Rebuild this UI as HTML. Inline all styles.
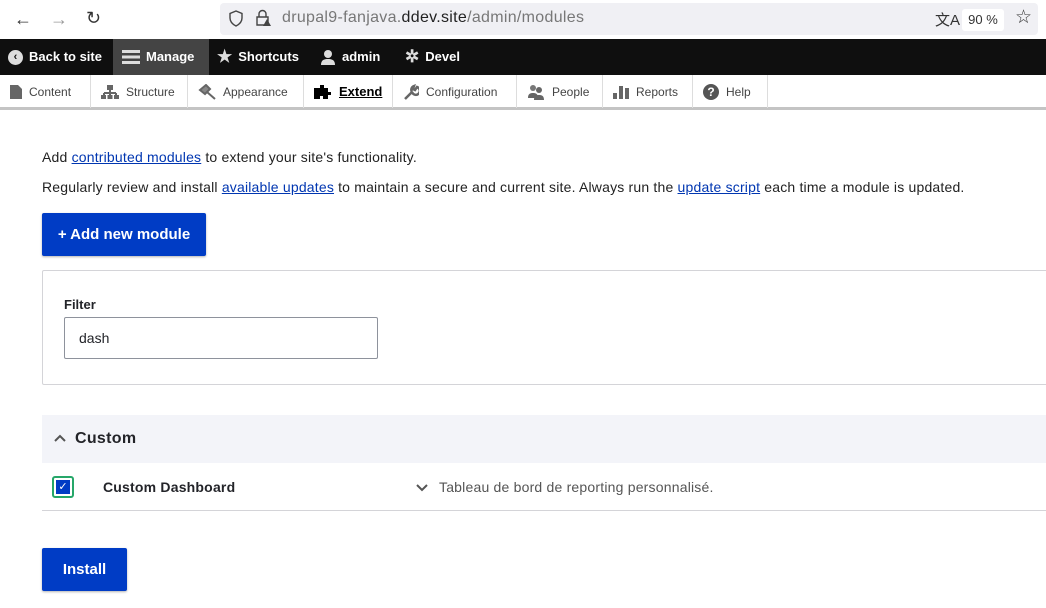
<!DOCTYPE html>
<html><head><meta charset="utf-8"><style>
*{box-sizing:border-box;margin:0;padding:0}
body{width:1046px;height:608px;overflow:hidden;background:#fff;font-family:"Liberation Sans",sans-serif;position:relative;color:#232429}
.a{position:absolute}
.tb{top:39px;height:36px;background:#0f0f0f;width:1046px}
.tbi{position:absolute;top:0;height:36px;color:#fff;font-weight:bold;font-size:13px;line-height:36px;display:flex;align-items:center;gap:6px}
.tray{top:75px;height:35px;width:1046px;background:#fff;border-bottom:3px solid #c4c4c4}
.ti{position:absolute;top:0;height:33px;border-right:1px solid #ddd;font-size:12px;color:#444;display:flex;align-items:center;gap:7px;padding-left:10px}
p{font-size:14px;color:#222;letter-spacing:0.19px}
a{color:#0036b1;text-decoration:underline}
.btn{background:#003cc5;color:#fff;font-weight:bold;font-size:15px;display:flex;align-items:center;justify-content:center;border-radius:2px;box-shadow:0 1px 2px rgba(0,0,0,.3)}
</style></head><body>
<div class="a" style="left:14px;top:9px;font-size:18px;color:#333">←</div>
<div class="a" style="left:50px;top:9px;font-size:18px;color:#999">→</div>
<div class="a" style="left:86px;top:8px;font-size:18px;color:#333">↻</div>
<div class="a" style="left:220px;top:3px;width:818px;height:32px;background:#f0f0f4;border-radius:4px"></div>
<svg class="a" style="left:228px;top:10px" width="16" height="17" viewBox="0 0 16 17"><path d="M8 1L2 3.5V8c0 4 3 6.5 6 8 3-1.5 6-4 6-8V3.5z" fill="none" stroke="#444" stroke-width="1.4"/></svg>
<svg class="a" style="left:254px;top:9px" width="18" height="18" viewBox="0 0 18 18"><path d="M5 8V5a3.5 3.5 0 017 0v3M3 8h11v8H3z" fill="none" stroke="#444" stroke-width="1.4"/><path d="M13 10l4 7h-8z" fill="#444"/></svg>
<div class="a" style="left:282px;top:9px;font-size:16px;color:#777;letter-spacing:0.3px">drupal9-fanjava.<span style="color:#222">ddev.site</span>/admin/modules</div>
<div class="a" style="left:935px;top:9px;font-size:15px;color:#333">文A</div>
<div class="a" style="left:962px;top:9px;width:42px;height:22px;background:#fff;border-radius:3px;font-size:13px;line-height:22px;text-align:center;color:#333">90 %</div>
<div class="a" style="left:1015px;top:6px;font-size:19px;color:#333">☆</div>
<div class="a tb">
<div class="tbi" style="left:8px"><span style="display:inline-block;width:15px;height:15px;border-radius:50%;background:#ddd;color:#111;font-size:11px;line-height:15px;text-align:center">‹</span>Back to site</div>
<div class="tbi" style="left:113px;width:96px;background:#444;padding-left:9px"><svg width="18" height="14"><rect y="0" width="18" height="3" fill="#ddd"/><rect y="5.5" width="18" height="3" fill="#ddd"/><rect y="11" width="18" height="3" fill="#ddd"/></svg>Manage</div>
<div class="tbi" style="left:217px"><span style="font-size:17px;color:#ddd">★</span>Shortcuts</div>
<div class="tbi" style="left:320px"><svg width="16" height="16"><circle cx="8" cy="5" r="4" fill="#ddd"/><path d="M1 16c0-5 3-6 7-6s7 1 7 6z" fill="#ddd"/></svg> admin</div>
<div class="tbi" style="left:405px"><span style="font-size:17px;color:#ddd">✲</span> Devel</div>
</div>
<div class="a tray">
<div class="ti" style="left:0;width:91px"><svg width="12" height="14"><path d="M0 0h8l4 4v10H0z" fill="#666"/></svg>Content</div>
<div class="ti" style="left:91px;width:97px"><svg width="18" height="14"><rect x="6" y="0" width="6" height="5" fill="#666"/><path d="M9 5v3M3 8h12M3 8v2M9 8v2M15 8v2" stroke="#666" stroke-width="2"/><rect x="0" y="10" width="5" height="4" fill="#666"/><rect x="6.5" y="10" width="5" height="4" fill="#666"/><rect x="13" y="10" width="5" height="4" fill="#666"/></svg>Structure</div>
<div class="ti" style="left:188px;width:116px"><svg width="18" height="16"><path d="M2 6l6-5 4 4-5 5zM9 8l8 7" stroke="#666" stroke-width="2" fill="#888"/></svg>Appearance</div>
<div class="ti" style="left:304px;width:89px;color:#000;font-weight:bold;font-size:13px"><svg width="18" height="16"><path d="M0 4h6V1h4v3h4v4h3v3h-3v4H9v-3H6v3H0z" fill="#000"/></svg><span style="text-decoration:underline">Extend</span></div>
<div class="ti" style="left:393px;width:124px"><svg width="16" height="16"><path d="M2 15l7-7M9 8a4 4 0 105-5l-2 3-2-1 1-3a4 4 0 00-2 6" stroke="#666" stroke-width="2.5" fill="none"/></svg>Configuration</div>
<div class="ti" style="left:517px;width:86px"><svg width="18" height="16"><circle cx="6" cy="4" r="3" fill="#777"/><circle cx="12" cy="6" r="3" fill="#666"/><path d="M1 14c0-4 2-5 5-5s5 1 5 5zM7 16c0-4 2-5 5-5s5 1 5 5z" fill="#666"/></svg>People</div>
<div class="ti" style="left:603px;width:90px"><svg width="16" height="15"><rect x="0" y="9" width="4" height="6" fill="#666"/><rect x="6" y="2" width="4" height="13" fill="#666"/><rect x="12" y="4" width="4" height="11" fill="#666"/></svg>Reports</div>
<div class="ti" style="left:693px;width:75px"><span style="display:inline-block;width:16px;height:16px;border-radius:50%;background:#555;color:#fff;font-size:12px;font-weight:bold;line-height:16px;text-align:center">?</span>Help</div>
</div>
<p class="a" style="left:42px;top:149px">Add <a>contributed modules</a> to extend your site's functionality.</p>
<p class="a" style="left:42px;top:179px">Regularly review and install <a>available updates</a> to maintain a secure and current site. Always run the <a>update script</a> each time a module is updated.</p>
<div class="a btn" style="left:42px;top:213px;width:164px;height:43px">+ Add new module</div>
<div class="a" style="left:42px;top:270px;width:1010px;height:115px;border:1px solid #d4d4d8;border-radius:2px"></div>
<div class="a" style="left:64px;top:297px;font-size:13px;font-weight:bold">Filter</div>
<div class="a" style="left:64px;top:317px;width:314px;height:42px;border:1px solid #8e929c;border-radius:2px;font-size:14px;padding:12px 14px">dash</div>
<div class="a" style="left:42px;top:415px;width:1004px;height:48px;background:#f3f4f9"></div>
<svg class="a" style="left:54px;top:434px" width="12" height="8"><path d="M1 7l5-5 5 5" stroke="#555" stroke-width="2" fill="none"/></svg>
<div class="a" style="left:75px;top:430px;font-size:16px;font-weight:bold;letter-spacing:0.3px">Custom</div>
<div class="a" style="left:42px;top:510px;width:1004px;height:1px;background:#d4d4d8"></div>
<div class="a" style="left:52px;top:476px;width:22px;height:22px;border:2px solid #26a769;border-radius:3px;padding:2px"><div style="width:14px;height:14px;background:#003cc5;color:#fff;font-size:11px;line-height:14px;text-align:center">✓</div></div>
<div class="a" style="left:103px;top:479px;font-size:14px;font-weight:bold;letter-spacing:0.2px">Custom Dashboard</div>
<svg class="a" style="left:416px;top:484px" width="12" height="8"><path d="M1 1l5 5 5-5" stroke="#555" stroke-width="2" fill="none"/></svg>
<div class="a" style="left:439px;top:479px;font-size:14px;color:#555;letter-spacing:0.2px">Tableau de bord de reporting personnalisé.</div>
<div class="a btn" style="left:42px;top:548px;width:85px;height:43px">Install</div>
</body></html>
